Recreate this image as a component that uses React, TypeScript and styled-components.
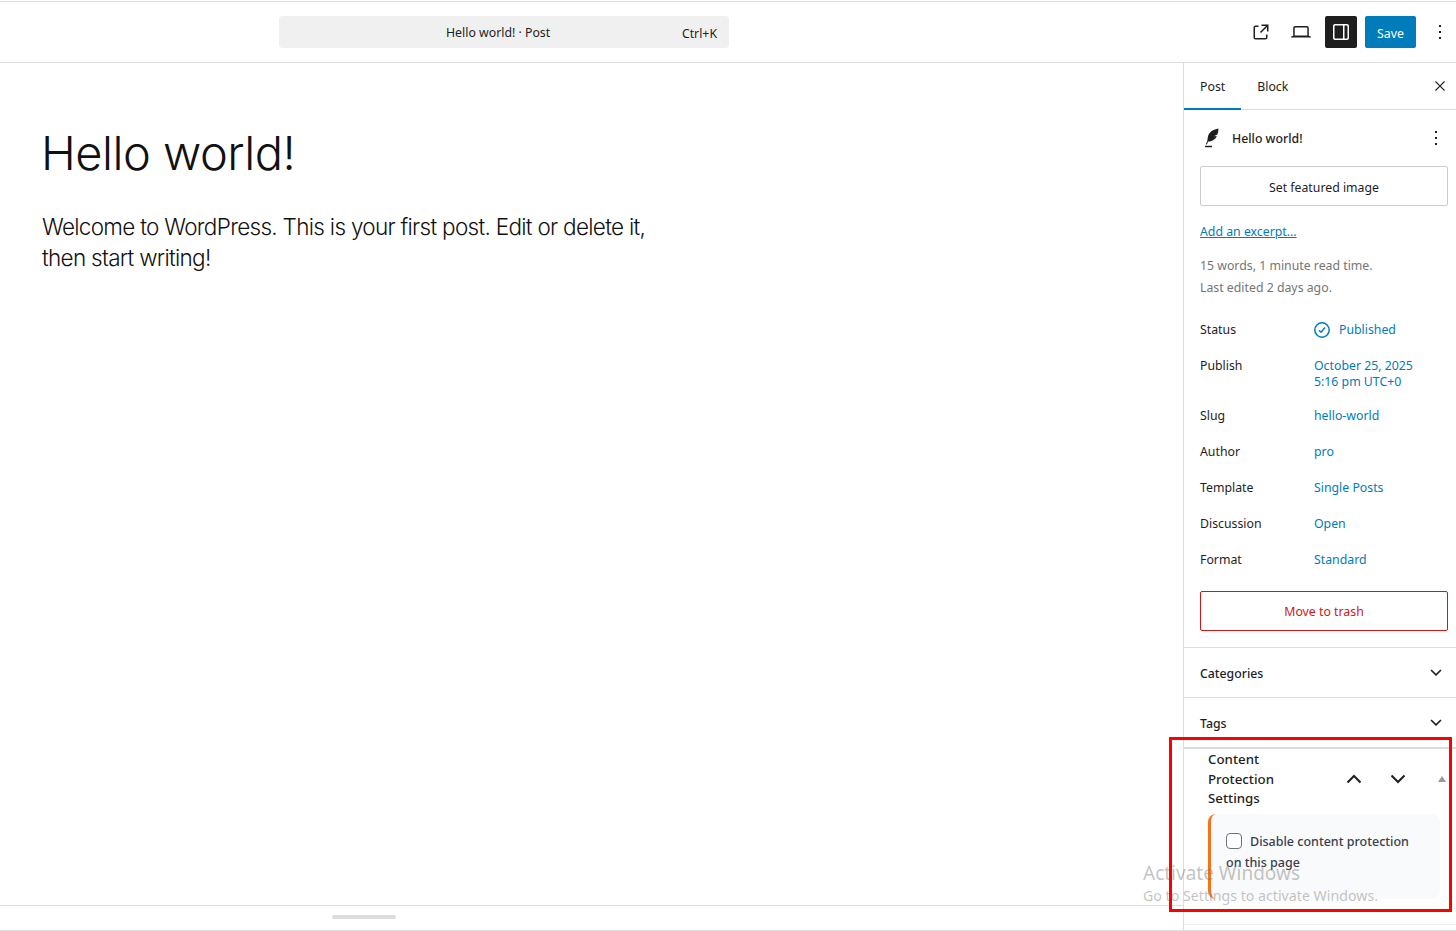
import React from 'react'
import styled, { createGlobalStyle } from 'styled-components'

const GlobalStyle = createGlobalStyle`
  html, body {
    margin: 0;
    padding: 0;
    background: white;
    overflow: hidden;
  }
  * {
    box-sizing: border-box;
  }
`

const Page = styled.div`
  position: relative;
  width: 1456px;
  height: 931px;
  padding-top: 1px;
  display: flex;
  flex-direction: column;
  overflow: hidden;
  background: white;
  color: #1e1e1e;
  font-family: 'Noto Sans', sans-serif;
  font-size: 12.3px;
`

const Header = styled.header`
  flex: none;
  height: 62px;
  display: flex;
  align-items: center;
  padding-left: 279px;
  border-top: 1px solid #ddd;
  border-bottom: 1px solid #ddd;
`

const SearchBar = styled.div`
  position: relative;
  width: 450px;
  height: 32px;
  display: flex;
  align-items: center;
  justify-content: space-between;
  padding: 0 12px 0 167px;
  background: #f0f0f0;
  border-radius: 4px;
`

const Shortcut = styled.span`
  padding-top: 2px;
`

const Actions = styled.div`
  margin-left: auto;
  display: flex;
  align-items: center;
  gap: 8px;
`

const IconButton = styled.div<{ $dark?: boolean }>`
  width: 32px;
  height: 32px;
  display: flex;
  align-items: center;
  justify-content: center;
  border-radius: 2px;
  background: ${p => (p.$dark ? '#1e1e1e' : 'transparent')};
  color: ${p => (p.$dark ? 'white' : '#1e1e1e')};

  svg {
    fill: currentColor;
  }
`

const SaveButton = styled.div`
  width: 51px;
  height: 32px;
  padding-top: 2px;
  display: flex;
  align-items: center;
  justify-content: center;
  background: #007cba;
  color: white;
  border-radius: 2px;
`

const Body = styled.div`
  flex: 1;
  min-height: 0;
  display: flex;
  border-bottom: 1px solid #ddd;
`

const Canvas = styled.main`
  flex: 1;
  min-width: 0;
  display: flex;
  flex-direction: column;
`

const Editor = styled.div`
  flex: 1;
  padding: 60px 0 0 42px;
  font-family: Inter, sans-serif;
  font-weight: 300;
  color: #111;
`

const PostTitle = styled.h1`
  margin: 0 0 28px -1px;
  font-size: 47px;
  line-height: 60px;
  font-weight: 300;
  letter-spacing: -0.5px;
`

const PostText = styled.p`
  margin: 0;
  width: 620px;
  font-size: 22.5px;
  line-height: 31px;
  letter-spacing: -0.7px;
`

const ResizeBar = styled.div`
  flex: none;
  height: 25px;
  padding: 9px 0 0 332px;
  border-top: 1px solid #ddd;
`

const ResizeHandle = styled.div`
  width: 64px;
  height: 4px;
  border-radius: 2px;
  background: #ddd;
`

const Sidebar = styled.aside`
  flex: none;
  width: 273px;
  display: flex;
  flex-direction: column;
  border-left: 1px solid #ddd;
  overflow: hidden;
`

const Tabs = styled.div`
  flex: none;
  height: 47px;
  display: flex;
  align-items: stretch;
  border-bottom: 1px solid #ddd;
`

const Tab = styled.div<{ $active?: boolean }>`
  display: flex;
  align-items: center;
  padding: 2px 16px 0;
  margin-bottom: -1px;
  border-bottom: 2px solid ${p => (p.$active ? '#007cba' : 'transparent')};
`

const CloseButton = styled.div`
  margin-left: auto;
  width: 32px;
  display: flex;
  align-items: center;
  justify-content: center;
`

const Summary = styled.section`
  flex: none;
  padding: 16px 8px 16px 16px;
  border-bottom: 1px solid #ddd;
`

const TitleRow = styled.div`
  height: 24px;
  display: flex;
  align-items: center;
  gap: 8px;
  font-weight: 500;
`

const RowKebab = styled.div`
  margin-left: auto;
  display: flex;
`

const OutlineButton = styled.div<{ $danger?: boolean }>`
  width: 248px;
  height: 40px;
  padding-top: 1px;
  display: flex;
  align-items: center;
  justify-content: center;
  border: 1px solid ${p => (p.$danger ? '#cc1818' : '#ccc')};
  border-radius: 2px;
  color: ${p => (p.$danger ? '#cc1818' : '#1e1e1e')};
`

const FeaturedButton = styled(OutlineButton)`
  margin-top: 16px;
  padding-top: 2px;
`

const TrashButton = styled(OutlineButton)`
  margin-top: 21px;
`

const ExcerptLink = styled.a`
  display: block;
  margin-top: 16px;
  line-height: 20px;
  color: #007cba;
  text-decoration: underline;
`

const Stats = styled.div`
  margin-top: 13px;
  line-height: 22px;
  color: #757575;
`

const MetaList = styled.div`
  margin-top: 21px;
  display: flex;
  flex-direction: column;
  gap: 16px;
`

const MetaRow = styled.div`
  display: flex;
  min-height: 20px;
  line-height: 20px;
`

const MetaLabel = styled.div`
  flex: none;
  width: 114px;
`

const MetaValue = styled.div<{ $multi?: boolean }>`
  display: flex;
  align-items: center;
  gap: 9px;
  color: #007cba;
  ${p => p.$multi && 'display: block; padding-top: 2px; line-height: 16px;'}
`

const PanelRow = styled.div<{ $thick?: boolean }>`
  flex: none;
  height: ${p => (p.$thick ? 51 : 50)}px;
  display: flex;
  align-items: center;
  justify-content: space-between;
  padding: 1px 8px 0 16px;
  border-bottom: ${p => (p.$thick ? 2 : 1)}px solid #ddd;
  font-weight: 500;
`

const ProtectionPanel = styled.section`
  flex: none;
  padding: 1px 0 25px 24px;
  border-bottom: 1px solid #eee;
`

const ProtectionHeader = styled.div`
  display: flex;
  align-items: center;
`

const ProtectionTitle = styled.h2`
  flex: none;
  width: 124px;
  margin: 0;
  padding-right: 40px;
  font-size: 13.3px;
  line-height: 19.6px;
  font-weight: 500;
`

const MoveButton = styled.div`
  width: 44px;
  display: flex;
  justify-content: center;
`

const ScrollArrow = styled.div`
  margin-left: 18px;
  width: 0;
  height: 0;
  border-left: 4px solid transparent;
  border-right: 4px solid transparent;
  border-bottom: 6px solid #9a9a9a;
`

const ProtectionBox = styled.div`
  width: 232px;
  height: 85px;
  margin-top: 5px;
  padding: 17px 26px 0 15px;
  background: #f9fafb;
  border-left: 3px solid #f97316;
  border-radius: 8px;
  font-size: 12.5px;
  line-height: 21px;
  color: #374151;
  font-weight: 500;
`

const Checkbox = styled.input`
  appearance: none;
  width: 16px;
  height: 16px;
  margin: 0 8px 0 0;
  vertical-align: -3px;
  background: white;
  border: 1px solid #6b7280;
  border-radius: 4px;
`

const Annotation = styled.div`
  position: absolute;
  left: 1169px;
  top: 737px;
  width: 283px;
  height: 175px;
  border: 3px solid #f00;
  pointer-events: none;
`

const Watermark = styled.div`
  position: absolute;
  left: 1143px;
  top: 860px;
  font-family: 'Noto Sans', sans-serif;
  color: rgba(120, 120, 120, 0.45);
  pointer-events: none;
`

const WatermarkTitle = styled.div`
  font-size: 19px;
  line-height: 26px;
`

const WatermarkText = styled.div`
  font-size: 14.2px;
  line-height: 20px;
`

const Glyph: React.FC<{ d: string; size?: number }> = ({ d, size = 24 }) => (
  <svg width={size} height={size} viewBox="0 0 24 24" fill="currentColor" aria-hidden="true">
    <path d={d} />
  </svg>
)

const icons = {
  external:
    'M19.5 4.5h-7V6h4.44l-5.97 5.97 1.06 1.06L18 7.06v4.44h1.5v-7Zm-13 1a2 2 0 0 0-2 2v10a2 2 0 0 0 2 2h10a2 2 0 0 0 2-2v-3H17v3a.5.5 0 0 1-.5.5h-10a.5.5 0 0 1-.5-.5v-10a.5.5 0 0 1 .5-.5h3V5.5h-3Z',
  laptop:
    'M20.5 16h-.7V8c0-1.1-.9-2-2-2H6.2c-1.1 0-2 .9-2 2v8h-.7c-.8 0-1.5.7-1.5 1.5h20c0-.8-.7-1.5-1.5-1.5zM5.7 8c0-.3.2-.5.5-.5h11.6c.3 0 .5.2.5.5v7.6H5.7V8z',
  panel:
    'M18 4H6c-1.1 0-2 .9-2 2v12c0 1.1.9 2 2 2h12c1.1 0 2-.9 2-2V6c0-1.1-.9-2-2-2zM5.5 18V6c0-.3.2-.5.5-.5h8v13H6c-.3 0-.5-.2-.5-.5zm13 0c0 .3-.2.5-.5.5h-2.5v-13H18c.3 0 .5.2.5.5v12z',
  more: 'M13 19h-2v-2h2v2zm0-6h-2v-2h2v2zm0-6h-2V5h2v2z',
  close:
    'm13.06 12 5.47-5.47-1.06-1.06L12 10.94 6.53 5.47 5.47 6.53 10.94 12l-5.47 5.47 1.06 1.06L12 13.06l5.47 5.47 1.06-1.06L13.06 12Z',
  down: 'M17.5 9.6 12 14.9 6.5 9.6l1.1-1.1L12 12.7l4.4-4.2 1.1 1.1z',
  quill:
    'M18.5 2.5c-5 .8-9.6 3.4-10.6 8.2L7.3 15l-1.5 3.2 1 .4 1.4-3c3.8-.3 7.1-1.8 8.6-5.6l-3 .3 3.6-1.9c.7-1.9 1.1-3.9 1.1-5.9zM5 19.8h7v1.5H5z',
}

const MoveChevron: React.FC<{ up?: boolean }> = ({ up }) => (
  <svg width="16" height="10" viewBox="0 0 16 10" fill="none" stroke="#1e1e1e" strokeWidth="2">
    <path d={up ? 'M1.5 8.5 8 2l6.5 6.5' : 'M1.5 1.5 8 8l6.5-6.5'} />
  </svg>
)

const PublishedIcon = () => (
  <svg width="16" height="16" viewBox="0 0 16 16" fill="none" stroke="#007cba" strokeWidth="1.5">
    <circle cx="8" cy="8" r="7.2" />
    <path d="M4.9 8.3 7 10.2l4-4.6" />
  </svg>
)

const meta = [
  { label: 'Slug', value: 'hello-world' },
  { label: 'Author', value: 'pro' },
  { label: 'Template', value: 'Single Posts' },
  { label: 'Discussion', value: 'Open' },
  { label: 'Format', value: 'Standard' },
]

export default function App() {
  return (
    <Page>
      <GlobalStyle />
      <Header>
        <SearchBar>
          <span>Hello world! · Post</span>
          <Shortcut>Ctrl+K</Shortcut>
        </SearchBar>
        <Actions>
          <IconButton><Glyph d={icons.external} /></IconButton>
          <IconButton><Glyph d={icons.laptop} /></IconButton>
          <IconButton $dark><Glyph d={icons.panel} /></IconButton>
          <SaveButton>Save</SaveButton>
          <IconButton><Glyph d={icons.more} /></IconButton>
        </Actions>
      </Header>
      <Body>
        <Canvas>
          <Editor>
            <PostTitle>Hello world!</PostTitle>
            <PostText>
              Welcome to WordPress. This is your first post. Edit or delete it, then start writing!
            </PostText>
          </Editor>
          <ResizeBar>
            <ResizeHandle />
          </ResizeBar>
        </Canvas>
        <Sidebar>
          <Tabs>
            <Tab $active>Post</Tab>
            <Tab>Block</Tab>
            <CloseButton><Glyph d={icons.close} size={18} /></CloseButton>
          </Tabs>
          <Summary>
            <TitleRow>
              <Glyph d={icons.quill} />
              <span>Hello world!</span>
              <RowKebab><Glyph d={icons.more} /></RowKebab>
            </TitleRow>
            <FeaturedButton>Set featured image</FeaturedButton>
            <ExcerptLink>Add an excerpt...</ExcerptLink>
            <Stats>
              15 words, 1 minute read time.
              <br />
              Last edited 2 days ago.
            </Stats>
            <MetaList>
              <MetaRow>
                <MetaLabel>Status</MetaLabel>
                <MetaValue><PublishedIcon />Published</MetaValue>
              </MetaRow>
              <MetaRow>
                <MetaLabel>Publish</MetaLabel>
                <MetaValue $multi>October 25, 2025<br />5:16 pm UTC+0</MetaValue>
              </MetaRow>
              {meta.map(row => (
                <MetaRow key={row.label}>
                  <MetaLabel>{row.label}</MetaLabel>
                  <MetaValue>{row.value}</MetaValue>
                </MetaRow>
              ))}
            </MetaList>
            <TrashButton $danger>Move to trash</TrashButton>
          </Summary>
          <PanelRow>
            <span>Categories</span>
            <Glyph d={icons.down} />
          </PanelRow>
          <PanelRow $thick>
            <span>Tags</span>
            <Glyph d={icons.down} />
          </PanelRow>
          <ProtectionPanel>
            <ProtectionHeader>
              <ProtectionTitle>Content Protection Settings</ProtectionTitle>
              <MoveButton><MoveChevron up /></MoveButton>
              <MoveButton><MoveChevron /></MoveButton>
              <ScrollArrow />
            </ProtectionHeader>
            <ProtectionBox>
              <Checkbox type="checkbox" readOnly />
              Disable content protection on this page
            </ProtectionBox>
          </ProtectionPanel>
        </Sidebar>
      </Body>
      <Watermark>
        <WatermarkTitle>Activate Windows</WatermarkTitle>
        <WatermarkText>Go to Settings to activate Windows.</WatermarkText>
      </Watermark>
      <Annotation />
    </Page>
  )
}
